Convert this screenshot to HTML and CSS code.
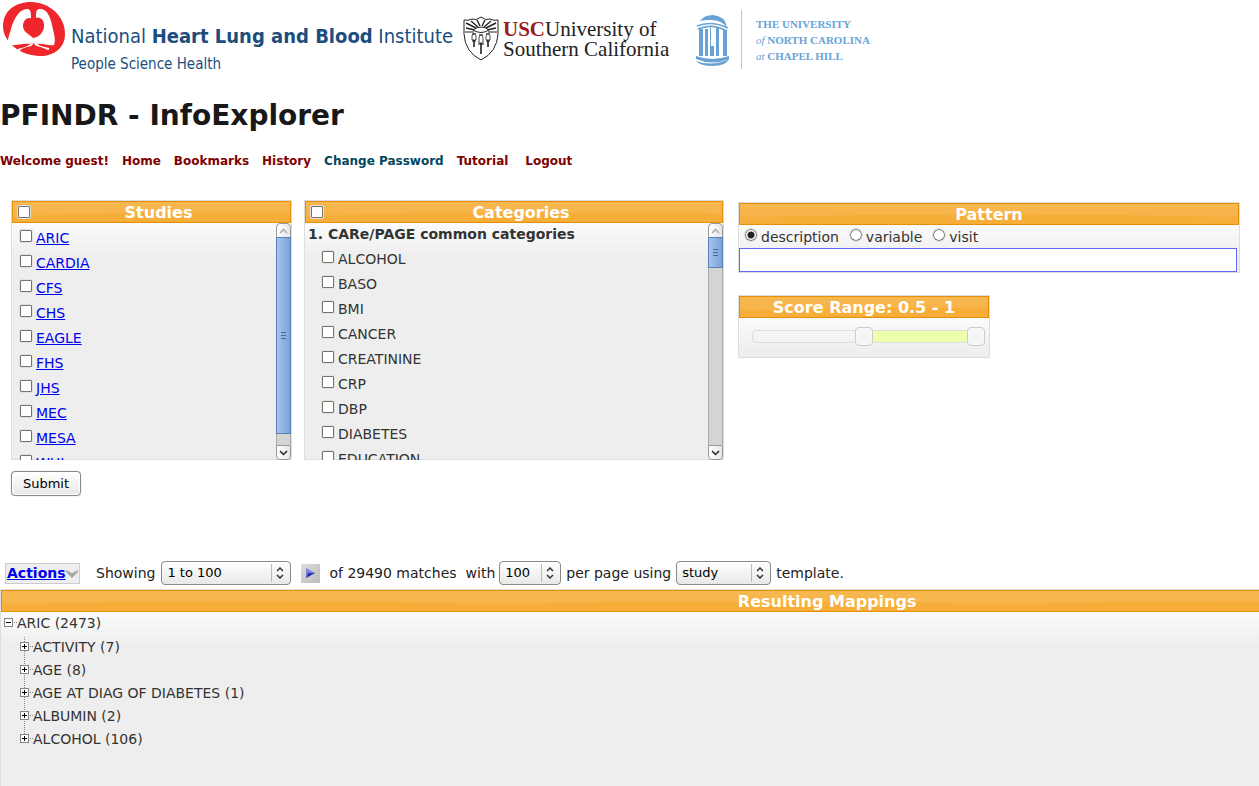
FILE: index.html
```html
<!DOCTYPE html>
<html lang="en">
<head>
<meta charset="utf-8">
<title>PFINDR - InfoExplorer</title>
<link rel="stylesheet" href="styles.css">
</head>
<body>
<header class="logos">
  <div class="logo nhlbi">
    <svg width="64" height="56" viewBox="0 0 64 56" aria-hidden="true">
      <path fill="#ef272d" d="M0 24C0 9 12 0 28 0C46 0 62 14 62 32C62 46 51 54 37 54C17 54 0 40 0 24Z"/>
      <path fill="#fff" d="M25 7C18 6 11 15 8 27C5 36 4 40 6 43C12 44 20 41 26 42C29 42 30 38 30 34L28 16C28 11 28 8 25 7Z"/>
      <path fill="#fff" d="M36 7C43 6 47 13 49 23C51 32 53 38 51 43C45 44 40 41 35 42C32 42 31 38 31 34L33 16C33 10 33 8 36 7Z"/>
      <path fill="#ef272d" d="M30 17C25 14 20 18 20 24C20 30 26 32 30 36C36 35 40 31 41 25C42 18 37 14 32 16V8H29Z"/>
      <path fill="none" stroke="#fff" stroke-width="2" d="M30 36C31 44 25 45 15 48M31 36C30 44 38 45 46 47"/>
      <path fill="#ef272d" d="M17 48Q31 40 44 48L37 52H25Z"/>
    </svg>
    <div class="nhlbi-text">
      <div class="nhlbi-name">National <b>Heart Lung and Blood</b> Institute</div>
      <div class="nhlbi-tag">People Science Health</div>
    </div>
  </div>
  <div class="logo usc">
    <svg width="36" height="46" viewBox="0 0 36 46" fill="none" stroke="#222" aria-hidden="true">
      <path d="M1 4Q5 5 9 3Q13 5 18 1Q23 5 27 3Q31 5 35 4V18Q34 36 18 44Q2 36 1 18Z"/>
      <path d="M2 16H11M25 16H34"/>
      <path stroke-width="1.4" d="M13 12L3 7M12 14L3 12M15 11L8 5M17 10L14 4M19 10L22 4M21 11L28 5M23 12L33 7M24 14L33 12"/>
      <path fill="#fff" d="M10 14Q18 8 26 14Q18 19 10 14Z"/>
      <path stroke-width="1.6" d="M11 22V31M18 24V38M25 22V31"/>
      <path fill="#fff" stroke-width=".8" d="M9 20L10 17L11 19L12 17L13 20V24H9ZM16 22L17 18L18 20L19 18L20 22V27H16ZM23 20L24 17L25 19L26 17L27 20V24H23Z"/>
      <path d="M9 25H13M15 28H21M23 25H27"/>
    </svg>
    <div class="usc-text"><span class="usc-mark">USC</span>University of<br>Southern California</div>
  </div>
  <div class="logo unc">
    <svg width="36" height="54" viewBox="0 0 36 54" fill="#69a3d6" aria-hidden="true">
      <path d="M5 7Q9 1 18 1Q30 2 32 13Q25 5 14 6Q9 6 5 7Z"/>
      <path fill="none" stroke="#69a3d6" stroke-width="1.6" d="M2 12Q16 6 33 14M3 15Q17 9 32 17"/>
      <path d="M4 15H8V42H4ZM10 15H13V42H10ZM15 14H16V42H15ZM21 14H24V42H21ZM28 16H32V42H28ZM16 32H19V42H15V39H16Z"/>
      <path d="M1 42Q17 48 34 42V45Q17 52 1 45ZM1 47Q17 53 34 45Q31 52 18 52Q5 52 1 47Z"/>
    </svg>
    <div class="unc-text">THE UNIVERSITY<br><i>of</i> NORTH CAROLINA<br><i>at</i> CHAPEL HILL</div>
  </div>
</header>

<h1 class="title">PFINDR - InfoExplorer</h1>

<nav class="menu">
  <span>Welcome guest!</span>
  <a href="#home">Home</a>
  <a href="#bookmarks">Bookmarks</a>
  <a href="#history">History</a>
  <a class="hovered" href="#password">Change Password</a>
  <a href="#tutorial">Tutorial</a>
  <a class="logout" href="#logout">Logout</a>
</nav>

<form class="search">
  <div class="filters">
    <section class="panel studies">
      <div class="panel-head">
        <input class="check" type="checkbox" aria-label="All studies">
        <h2 class="panel-title">Studies</h2>
      </div>
      <div class="scroll">
        <ul class="list">
          <li class="item"><input class="check" type="checkbox" aria-label="ARIC"><a href="#aric">ARIC</a></li>
          <li class="item"><input class="check" type="checkbox" aria-label="CARDIA"><a href="#cardia">CARDIA</a></li>
          <li class="item"><input class="check" type="checkbox" aria-label="CFS"><a href="#cfs">CFS</a></li>
          <li class="item"><input class="check" type="checkbox" aria-label="CHS"><a href="#chs">CHS</a></li>
          <li class="item"><input class="check" type="checkbox" aria-label="EAGLE"><a href="#eagle">EAGLE</a></li>
          <li class="item"><input class="check" type="checkbox" aria-label="FHS"><a href="#fhs">FHS</a></li>
          <li class="item"><input class="check" type="checkbox" aria-label="JHS"><a href="#jhs">JHS</a></li>
          <li class="item"><input class="check" type="checkbox" aria-label="MEC"><a href="#mec">MEC</a></li>
          <li class="item"><input class="check" type="checkbox" aria-label="MESA"><a href="#mesa">MESA</a></li>
          <li class="item"><input class="check" type="checkbox" aria-label="WHI"><a href="#whi">WHI</a></li>
        </ul>
        <div class="bar">
          <button class="bar-end up" type="button" aria-label="Scroll up"><svg width="9" height="6" viewBox="0 0 9 6"><path d="M1 5L4.500 1.500L8 5"/></svg></button>
          <div class="bar-track"><div class="thumb thumb-long"><i class="grip"></i></div></div>
          <button class="bar-end down" type="button" aria-label="Scroll down"><svg width="9" height="6" viewBox="0 0 9 6"><path d="M1 1L4.500 4.500L8 1"/></svg></button>
        </div>
      </div>
    </section>

    <section class="panel categories">
      <div class="panel-head">
        <input class="check" type="checkbox" aria-label="All categories">
        <h2 class="panel-title">Categories</h2>
      </div>
      <div class="scroll">
        <div class="group">
          <h3 class="group-title">1. CARe/PAGE common categories</h3>
          <ul class="list nested">
            <li class="item"><input class="check" type="checkbox" id="c1"><label for="c1">ALCOHOL</label></li>
            <li class="item"><input class="check" type="checkbox" id="c2"><label for="c2">BASO</label></li>
            <li class="item"><input class="check" type="checkbox" id="c3"><label for="c3">BMI</label></li>
            <li class="item"><input class="check" type="checkbox" id="c4"><label for="c4">CANCER</label></li>
            <li class="item"><input class="check" type="checkbox" id="c5"><label for="c5">CREATININE</label></li>
            <li class="item"><input class="check" type="checkbox" id="c6"><label for="c6">CRP</label></li>
            <li class="item"><input class="check" type="checkbox" id="c7"><label for="c7">DBP</label></li>
            <li class="item"><input class="check" type="checkbox" id="c8"><label for="c8">DIABETES</label></li>
            <li class="item"><input class="check" type="checkbox" id="c9"><label for="c9">EDUCATION</label></li>
          </ul>
        </div>
        <div class="bar">
          <button class="bar-end up" type="button" aria-label="Scroll up"><svg width="9" height="6" viewBox="0 0 9 6"><path d="M1 5L4.500 1.500L8 5"/></svg></button>
          <div class="bar-track"><div class="thumb thumb-short"><i class="grip"></i></div></div>
          <button class="bar-end down" type="button" aria-label="Scroll down"><svg width="9" height="6" viewBox="0 0 9 6"><path d="M1 1L4.500 4.500L8 1"/></svg></button>
        </div>
      </div>
    </section>

    <div class="side">
      <section class="panel">
        <div class="panel-head"><h2 class="panel-title">Pattern</h2></div>
        <div class="radios">
          <input class="radio" type="radio" name="field" id="r1" checked><label for="r1">description</label>
          <input class="radio" type="radio" name="field" id="r2"><label for="r2">variable</label>
          <input class="radio" type="radio" name="field" id="r3"><label for="r3">visit</label>
        </div>
        <input class="pattern" type="text" aria-label="Pattern">
      </section>
      <section class="panel score">
        <div class="panel-head"><h2 class="panel-title">Score Range: 0.5 - 1</h2></div>
        <div class="slider">
          <div class="slider-track"></div>
          <input class="range" type="range" min="0" max="1" step="0.1" value="0.5" aria-label="Minimum score">
          <input class="range" type="range" min="0" max="1" step="0.1" value="1" aria-label="Maximum score">
        </div>
      </section>
    </div>
  </div>
  <button class="submit" type="submit">Submit</button>
</form>

<div class="toolbar">
  <a class="actions" href="#actions">Actions<svg width="12" height="8" viewBox="0 0 12 8"><path fill="#aaa" d="M0 0L6 3L12 0V2L6 8L0 2Z"/></svg></a>
  <label class="showing" for="page">Showing</label>
  <span class="pick pick-page">
    <select id="page"><option>1 to 100</option></select>
    <svg width="8" height="12" viewBox="0 0 8 12"><path d="M1 4L4 1L7 4M1 8L4 11L7 8"/></svg>
  </span>
  <button class="next" type="button" aria-label="Next page"><svg width="9" height="10" viewBox="0 0 9 10"><path fill="#7d83dd" d="M0 0L9 5L0 10Z"/><path fill="#2d35a5" d="M2 5H9L0 10Z"/></svg></button>
  <span class="matches">of 29490 matches</span>
  <label class="with" for="size">with</label>
  <span class="pick pick-size">
    <select id="size"><option>100</option></select>
    <svg width="8" height="12" viewBox="0 0 8 12"><path d="M1 4L4 1L7 4M1 8L4 11L7 8"/></svg>
  </span>
  <label class="near" for="tpl">per page using</label>
  <span class="pick pick-template">
    <select id="tpl"><option>study</option></select>
    <svg width="8" height="12" viewBox="0 0 8 12"><path d="M1 4L4 1L7 4M1 8L4 11L7 8"/></svg>
  </span>
  <span class="near">template.</span>
</div>

<div class="results-view">
  <section class="panel results">
    <div class="panel-head"><h2 class="panel-title">Resulting Mappings</h2></div>
    <ul class="tree">
      <li>
        <div class="node"><button class="toggle open" type="button" aria-label="Collapse ARIC"></button><i class="dots"></i>ARIC (2473)</div>
        <ul class="branch">
          <li class="node"><button class="toggle" type="button" aria-label="Expand ACTIVITY"></button><i class="dots"></i>ACTIVITY (7)</li>
          <li class="node"><button class="toggle" type="button" aria-label="Expand AGE"></button><i class="dots"></i>AGE (8)</li>
          <li class="node"><button class="toggle" type="button" aria-label="Expand AGE AT DIAG OF DIABETES"></button><i class="dots"></i>AGE AT DIAG OF DIABETES (1)</li>
          <li class="node"><button class="toggle" type="button" aria-label="Expand ALBUMIN"></button><i class="dots"></i>ALBUMIN (2)</li>
          <li class="node"><button class="toggle" type="button" aria-label="Expand ALCOHOL"></button><i class="dots"></i>ALCOHOL (106)</li>
        </ul>
      </li>
    </ul>
  </section>
</div>
</body>
</html>
```
FILE: styles.css
```css
* { box-sizing: border-box; }
html { height: 100%; }
body {
  margin: 0;
  min-height: 100%;
  display: flex;
  flex-direction: column;
  background: #fff;
  color: #222;
  font: 14px/20px "DejaVu Sans", Verdana, sans-serif;
}
h1, h2, h3, ul { margin: 0; padding: 0; }
ul { list-style: none; }
button, input, select { font: inherit; margin: 0; padding: 0; }

/* Logos */
.logos { display: flex; align-items: flex-start; height: 98px; white-space: nowrap; }
.logo { display: flex; }
.logo svg { flex: none; }
.nhlbi { padding: 2px 0 0 3px; width: 463px; color: #1b4e7e; font-family: "Liberation Sans Narrow", "DejaVu Sans Condensed", sans-serif; }
.nhlbi-text { padding: 19px 0 0 4px; }
.nhlbi-name { font-size: 20px; line-height: 30px; }
.nhlbi-tag { font-size: 15px; line-height: 26px; }
.usc { padding-top: 16px; width: 232px; font: 21px/20px "Liberation Serif", serif; color: #222; }
.usc-text { padding-left: 4px; padding-top: 3px; }
.usc-mark { color: #981b1e; font-weight: bold; }
.unc { padding-top: 14px; color: #69a3d6; font: bold 11px/16px "Liberation Serif", serif; }
.unc-text { margin: -4px 0 0 10px; padding: 6px 0 5px 14px; border-left: 1px solid #a9cbe6; }
.unc-text i { font-weight: normal; }

.title { font-size: 28px; line-height: 36px; color: #181818; }

.menu { display: flex; gap: 13px; margin: 19px 0 31px; font-size: 12px; line-height: 16px; font-weight: bold; color: #800000; }
.menu a { color: #800000; text-decoration: none; }
.menu .hovered { color: #00485e; }
.menu .logout { margin-left: 4px; }

/* Panels */
.panel {
  border: 1px solid #ddd;
  background: linear-gradient(#fafafa 24px, #eee 56px);
  color: #333;
}
.panel-head {
  display: flex;
  align-items: center;
  height: 22px;
  padding: 0 4px;
  border: 1px solid #e78f08;
  background: radial-gradient(ellipse 70% 48% at 50% 100%, #f6ae38 97%, transparent) 0 0 / 500px 100%, linear-gradient(#f7b850, #f6b045);
}
.panel-title { flex: 1; text-align: center; font-size: 16px; line-height: 20px; padding-top: 2px; color: #fff; }
.filters { display: flex; align-items: flex-start; padding: 0 19px 0 11px; }
.studies { width: 281px; }
.categories { width: 420px; margin-left: 12px; }
.side { flex: 1; margin: 2px 0 0 14px; min-width: 260px; }
.scroll { display: flex; height: 237px; margin-bottom: -1px; overflow: hidden; }
.list { flex: 1; padding: 2px 0 0 7px; }
.group { flex: 1; padding: 0 3px; }
.group-title { font-size: 14px; line-height: 22px; }
.nested { padding: 1px 0 0 13px; }
.item { display: flex; align-items: flex-start; gap: 3px; height: 25px; line-height: 26px; }
.item .check { margin-top: 4px; }
.item a { color: #00e; }
.check {
  appearance: none;
  flex: none;
  width: 14px;
  height: 14px;
  border: 1px solid #e4e2de;
  border-radius: 2px;
  background: #fff;
  box-shadow: inset 0 0 0 1px #77736c;
}

/* Scroll bars */
.bar { display: flex; flex-direction: column; width: 15px; }
.bar-end { height: 15px; flex: none; display: grid; place-items: center; border: 1px solid #999; background: linear-gradient(90deg, #fff, #e6e6e6); }
.bar-end svg { fill: none; stroke: #222; stroke-width: 1.5; }
.up { border-radius: 4px 4px 0 0; }
.up svg { stroke: #aaa; }
.down { border-radius: 0 0 4px 4px; }
.bar-track { flex: 1; border: solid #aaa; border-width: 0 1px; background: #d5d4d2; }
.thumb { display: grid; place-items: center; margin: -1px -1px 0; border: 1px solid #5a82b4; background: linear-gradient(90deg, #a6c4ec, #7ba2d6); }
.thumb-long { height: 95%; }
.thumb-short { height: 31px; }
.grip { width: 5px; height: 7px; background: repeating-linear-gradient(#456a9c 0 1px, transparent 1px 3px); }

/* Pattern and score */
.radios { display: flex; align-items: flex-start; padding: 0 5px; height: 23px; line-height: 24px; }
.radios label { margin: 0 10px 0 3px; }
.radio { appearance: none; width: 14px; height: 14px; margin-top: 3px; border: 1px solid #e0deda; border-radius: 50%; background: #fff; box-shadow: inset 0 0 0 1px #77736c; }
.radio:checked { background: radial-gradient(#222 3px, #fff 4px); }
.pattern { display: block; width: calc(100% - 2px); height: 24px; border: 1px solid #66f; background: #fff; outline: none; }
.score { width: 252px; margin-top: 22px; }
.slider { display: grid; align-items: center; height: 39px; padding: 0 4px 2px; }
.slider > * { grid-area: 1 / 1; }
.slider-track { height: 13px; margin: 0 9px; border: 1px solid #ddd; border-radius: 4px; background: linear-gradient(90deg, transparent 50%, #ebffad 50%); }
.range { appearance: none; width: 100%; height: 20px; background: none; pointer-events: none; }
.range::-webkit-slider-thumb { appearance: none; width: 18px; height: 19px; border: 1px solid #ccc; border-radius: 4px; background: #f6f6f6; pointer-events: auto; }

.submit { display: block; margin: 11px 0 0 11px; width: 70px; height: 25px; font-size: 13px; color: #000; border: 1px solid #8c8a86; border-radius: 4px; background: linear-gradient(#fff, #e9e8e7); box-shadow: inset 0 0 0 1px #fff, 0 0 1px #999; }

/* Result toolbar */
.toolbar { display: flex; align-items: center; height: 26px; margin: 64px 0 3px; padding-left: 5px; white-space: nowrap; }
.actions { padding: 0 1px; width: 75px; height: 21px; line-height: 19px; border: 1px solid #ccc; background: #eee; color: #00e; font-weight: bold; }
.showing { margin: 0 6px 0 16px; }
.near { margin-left: 5px; }
.with { margin: 0 4px 0 9px; }
.pick { position: relative; }
.pick select { display: block; appearance: none; width: 100%; height: 24px; padding: 0 24px 0 5px; font-size: 13px; color: #000; border: 1px solid #8c8a86; border-radius: 4px; background: linear-gradient(#bbb, #bbb) calc(100% - 18px) 50% / 1px 18px no-repeat, linear-gradient(#fff, #e9e8e7); }
.pick svg { position: absolute; right: 7px; top: 6px; fill: none; stroke: #333; stroke-width: 1.5; pointer-events: none; }
.pick-page { width: 130px; }
.pick-size { width: 62px; }
.pick-template { width: 95px; margin-left: 5px; }
.next { display: grid; place-items: center; width: 19px; height: 19px; margin: 0 9px 0 10px; border: 0; background: linear-gradient(135deg, #ddd, #bbb); }

/* The results panel is wider than its view */
.results-view { flex: 1; display: flex; overflow: hidden; }
.results { flex: none; width: 131.4%; border-bottom: 0; }
.tree { padding-left: 3px; }
.node { display: flex; align-items: center; height: 23px; line-height: 23px; }
.branch { margin-left: 16px; padding-top: 1px; background: repeating-linear-gradient(#888 0 1px, transparent 1px 2px) 4px 2px / 1px 102px no-repeat; }
.toggle { width: 9px; height: 9px; margin-bottom: 3px; border: 1px solid #848484; background: linear-gradient(#000, #000) 50% / 5px 1px no-repeat, linear-gradient(#000, #000) 50% / 1px 5px no-repeat, #fff; }
.toggle.open { background: linear-gradient(#000, #000) 50% / 5px 1px no-repeat, #fff; }
.dots { width: 4px; height: 1px; margin-bottom: 3px; background: repeating-linear-gradient(90deg, transparent 0 1px, #888 1px 2px); }
```
